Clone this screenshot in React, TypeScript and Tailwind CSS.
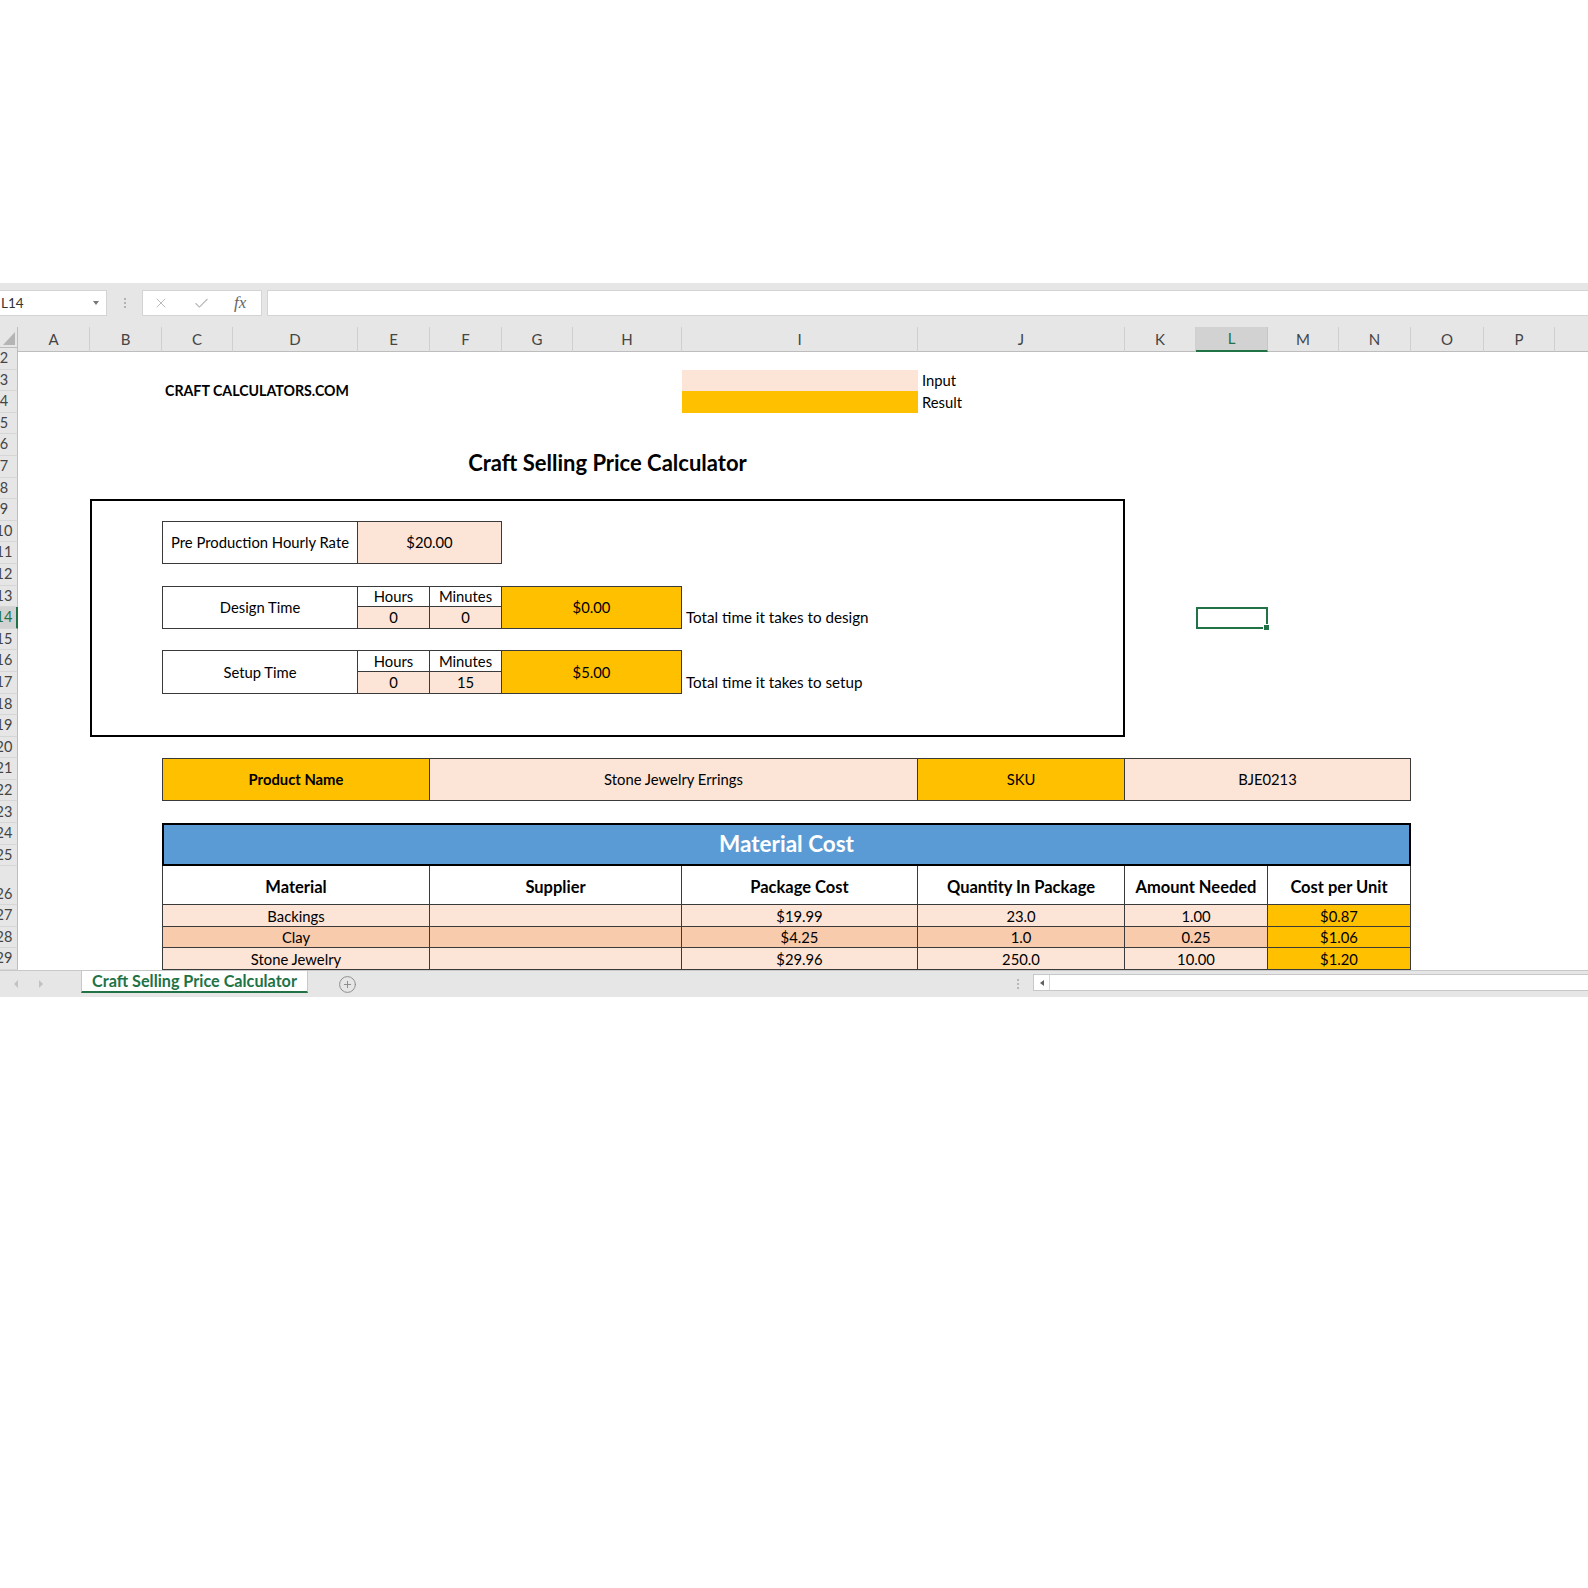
import { X, Check, CirclePlus } from "lucide-react";

const COLS = ["A", "B", "C", "D", "E", "F", "G", "H", "I", "J", "K", "L", "M", "N", "O", "P", "Q"];
const ROWS = Array.from({ length: 28 }, (_, i) => i + 2);

// widths of A..Q, same template for header and sheet
const colTemplate =
  "grid-cols-[72px_72px_71px_125px_72px_72px_71px_109px_236px_207px_71px_72px_71px_72px_73px_71px_100px]";

const cell = "flex items-center justify-center whitespace-nowrap text-[14.8px] leading-none border-[#3a3a3a]";

const tableCols = [
  "col-[3/span_3] border-l",
  "col-[6/span_3]",
  "col-[9]",
  "col-[10]",
  "col-[11/span_2]",
  "col-[13/span_2]",
];

const headers = ["Material", "Supplier", "Package Cost", "Quantity In Package", "Amount Needed", "Cost per Unit"];

const materials = [
  { row: "row-[26]", bg: "bg-[#fce4d6]", cells: ["Backings", "", "$19.99", "23.0", "1.00", "$0.87"] },
  { row: "row-[27]", bg: "bg-[#f8cbad]", cells: ["Clay", "", "$4.25", "1.0", "0.25", "$1.06"] },
  { row: "row-[28]", bg: "bg-[#fce4d6]", cells: ["Stone Jewelry", "", "$29.96", "250.0", "10.00", "$1.20"] },
];

const FormulaBar = () => (
  <div className="flex h-[44px] items-start bg-[#e6e6e6] pt-[7px]">
    <div className="flex h-[26px] w-[107px] items-center justify-between border border-l-0 border-[#d4d4d4] bg-white pl-[1px] pr-[7px] text-[13.5px] text-[#333]">
      <span>L14</span>
      <span className="h-0 w-0 border-x-[3.5px] border-t-[4px] border-x-transparent border-t-[#777]" />
    </div>
    <div className="flex h-[26px] w-[35px] flex-col items-center justify-center gap-[2px]">
      <span className="h-[2px] w-[2px] rounded-full bg-[#a0a0a0]" />
      <span className="h-[2px] w-[2px] rounded-full bg-[#a0a0a0]" />
      <span className="h-[2px] w-[2px] rounded-full bg-[#a0a0a0]" />
    </div>
    <div className="flex h-[26px] w-[120px] items-center gap-[24px] border border-[#d4d4d4] bg-white pl-[10px]">
      <X size={16} strokeWidth={1.4} className="text-[#b5b5b5]" />
      <Check size={17} strokeWidth={1.5} className="text-[#b5b5b5]" />
      <span className="font-['Liberation_Serif',serif] text-[17px] italic text-[#666]">fx</span>
    </div>
    <div className="ml-[5px] h-[26px] flex-1 border border-r-0 border-[#d4d4d4] bg-white" />
  </div>
);

const ColumnHeaders = () => (
  <div className="flex h-[21px]">
    <div className="flex w-[18px] shrink-0 items-end justify-end border-b border-r border-[#bdbdbd] bg-[#e6e6e6] pb-[2px] pr-[2px]">
      <svg width="12" height="13" viewBox="0 0 12 13">
        <polygon points="12,0 12,13 0,13" fill="#b4b4b4" />
      </svg>
    </div>
    <div className={`grid shrink-0 ${colTemplate}`}>
      {COLS.map((c) => (
        <div
          key={c}
          className={
            c === "L"
              ? "flex items-center justify-center border-b-2 border-r border-b-[#217346] border-r-[#c6c6c6] bg-[#d2d2d2] text-[15px] text-[#217346]"
              : "flex items-center justify-center border-b border-r border-b-[#bdbdbd] border-r-[#cfcfcf] bg-[#e6e6e6] text-[15px] text-[#444]"
          }
        >
          {c}
        </div>
      ))}
    </div>
  </div>
);

const RowHeaders = () => (
  <div className="flex w-[18px] shrink-0 flex-col overflow-hidden bg-[#e6e6e6]">
    {ROWS.map((n) => (
      <div
        key={n}
        className={`flex shrink-0 border-b border-b-[#d6d6d6] ${n === 26 ? "h-[39px] items-end pb-[3px]" : "h-[21.6px] items-center"} ${
          n === 14 ? "border-r-2 border-r-[#217346] bg-[#d2d2d2] text-[#217346]" : "border-r border-r-[#bdbdbd] text-[#444]"
        }`}
      >
        <span className="-ml-[10px] block w-[28px] shrink-0 text-center text-[14.5px] leading-none">{n}</span>
      </div>
    ))}
  </div>
);

const TimeBlock = ({ rows, label, hours, minutes, cost, note }: { rows: "design" | "setup"; label: string; hours: string; minutes: string; cost: string; note: string }) =>
  rows === "design" ? (
    <>
      <div className={`${cell} col-[3/span_2] row-[12/span_2] border`}>{label}</div>
      <div className={`${cell} col-[5] row-[12] border-y border-r`}>Hours</div>
      <div className={`${cell} col-[6] row-[12] border-y border-r`}>Minutes</div>
      <div className={`${cell} col-[5] row-[13] border-b border-r bg-[#fce4d6]`}>{hours}</div>
      <div className={`${cell} col-[6] row-[13] border-b border-r bg-[#fce4d6]`}>{minutes}</div>
      <div className={`${cell} col-[7/span_2] row-[12/span_2] border-y border-r bg-[#ffc000]`}>{cost}</div>
      <div className={`${cell} col-[9/span_2] row-[13] justify-start pl-[4px] text-[15.2px]`}>{note}</div>
    </>
  ) : (
    <>
      <div className={`${cell} col-[3/span_2] row-[15/span_2] border`}>{label}</div>
      <div className={`${cell} col-[5] row-[15] border-y border-r`}>Hours</div>
      <div className={`${cell} col-[6] row-[15] border-y border-r`}>Minutes</div>
      <div className={`${cell} col-[5] row-[16] border-b border-r bg-[#fce4d6]`}>{hours}</div>
      <div className={`${cell} col-[6] row-[16] border-b border-r bg-[#fce4d6]`}>{minutes}</div>
      <div className={`${cell} col-[7/span_2] row-[15/span_2] border-y border-r bg-[#ffc000]`}>{cost}</div>
      <div className={`${cell} col-[9/span_2] row-[16] justify-start pl-[4px] text-[15.2px]`}>{note}</div>
    </>
  );

const Sheet = () => (
  <div className={`grid shrink-0 ${colTemplate} grid-rows-[repeat(24,21.6px)_39px_repeat(3,21.6px)]`}>
    {/* branding + legend */}
    <div className="col-[3/span_3] row-[2/span_2] flex items-center whitespace-nowrap pl-[3px] text-[14.2px] font-bold leading-none">
      CRAFT CALCULATORS.COM
    </div>
    <div className="col-[9] row-[2] bg-[#fce4d6]" />
    <div className="col-[9] row-[3] bg-[#ffc000]" />
    <div className={`${cell} col-[10] row-[2] justify-start pl-[4px]`}>Input</div>
    <div className={`${cell} col-[10] row-[3] justify-start pl-[4px]`}>Result</div>

    <div className="col-[2/span_9] row-[5/span_2] flex items-end justify-center pb-[3px] text-[22px] font-bold leading-[24px]">
      Craft Selling Price Calculator
    </div>

    {/* labour box */}
    <div className="col-[2/span_9] row-[8/span_11] border-2 border-black" />
    <div className={`${cell} col-[3/span_2] row-[9/span_2] border`}>Pre Production Hourly Rate</div>
    <div className={`${cell} col-[5/span_2] row-[9/span_2] border-y border-r bg-[#fce4d6]`}>$20.00</div>
    <TimeBlock rows="design" label="Design Time" hours="0" minutes="0" cost="$0.00" note="Total time it takes to design" />
    <TimeBlock rows="setup" label="Setup Time" hours="0" minutes="15" cost="$5.00" note="Total time it takes to setup" />

    {/* selected cell L14 */}
    <div className="relative col-[12] row-[13] border-2 border-[#217346]">
      <span className="absolute -bottom-[4px] -right-[4px] h-[7px] w-[7px] border border-white bg-[#217346]" />
    </div>

    {/* product */}
    <div className={`${cell} col-[3/span_3] row-[20/span_2] border bg-[#ffc000] font-bold`}>Product Name</div>
    <div className={`${cell} col-[6/span_4] row-[20/span_2] border-y border-r bg-[#fce4d6]`}>Stone Jewelry Errings</div>
    <div className={`${cell} col-[10] row-[20/span_2] border-y border-r bg-[#ffc000]`}>SKU</div>
    <div className={`${cell} col-[11/span_4] row-[20/span_2] border-y border-r bg-[#fce4d6]`}>BJE0213</div>

    {/* material cost */}
    <div className={`${cell} col-[3/span_12] row-[23/span_2] border-2 border-black bg-[#5b9bd5] text-[22.5px] font-bold text-white`}>
      Material Cost
    </div>
    {headers.map((h, i) => (
      <div key={h} className={`${cell} ${tableCols[i]} row-[25] border-b border-r pt-[3px] text-[16.5px] font-bold`}>
        {h}
      </div>
    ))}
    {materials.map((m) =>
      m.cells.map((v, i) => (
        <div key={m.row + i} className={`${cell} ${tableCols[i]} ${m.row} border-b border-r pt-[1px] ${i === 5 ? "bg-[#ffc000]" : m.bg}`}>
          {v}
        </div>
      ))
    )}
  </div>
);

const SheetTabs = () => (
  <div className="flex h-[27px] border-t border-[#c8c8c8] bg-[#e6e6e6]">
    <div className="flex w-[81px] shrink-0 items-center">
      <span className="ml-[14px] h-0 w-0 border-y-[4px] border-r-[4px] border-y-transparent border-r-[#c2c2c2]" />
      <span className="ml-[21px] h-0 w-0 border-y-[4px] border-l-[4px] border-y-transparent border-l-[#c2c2c2]" />
    </div>
    <div className="flex h-[22px] w-[227px] shrink-0 items-center justify-center border-x border-b-2 border-x-[#c8c8c8] border-b-[#217346] bg-white text-[16.2px] font-bold leading-none text-[#217346]">
      Craft Selling Price Calculator
    </div>
    <div className="ml-[30px] flex items-center">
      <CirclePlus size={19} strokeWidth={1.2} className="text-[#8a8a8a]" />
    </div>
    <div className="flex-1" />
    <div className="flex w-[578px] shrink-0 items-start">
      <div className="flex h-[26px] w-[16px] flex-col items-center justify-center gap-[2px]">
        <span className="h-[2px] w-[2px] rounded-full bg-[#a8a8a8]" />
        <span className="h-[2px] w-[2px] rounded-full bg-[#a8a8a8]" />
        <span className="h-[2px] w-[2px] rounded-full bg-[#a8a8a8]" />
      </div>
      <div className="ml-[7px] mt-[3px] flex h-[17px] flex-1 border border-r-0 border-[#c8c8c8] bg-white">
        <div className="flex w-[16px] items-center justify-center border-r border-[#d6d6d6]">
          <span className="h-0 w-0 border-y-[3.5px] border-r-[4px] border-y-transparent border-r-[#606060]" />
        </div>
      </div>
    </div>
  </div>
);

export default function App() {
  return (
    <div className="h-[1588px] w-[1588px] overflow-hidden bg-white font-['Lato','Noto_Sans',sans-serif] text-black">
      <div className="h-[283px]" />
      <FormulaBar />
      <ColumnHeaders />
      <div className="flex">
        <RowHeaders />
        <Sheet />
      </div>
      <SheetTabs />
    </div>
  );
}
